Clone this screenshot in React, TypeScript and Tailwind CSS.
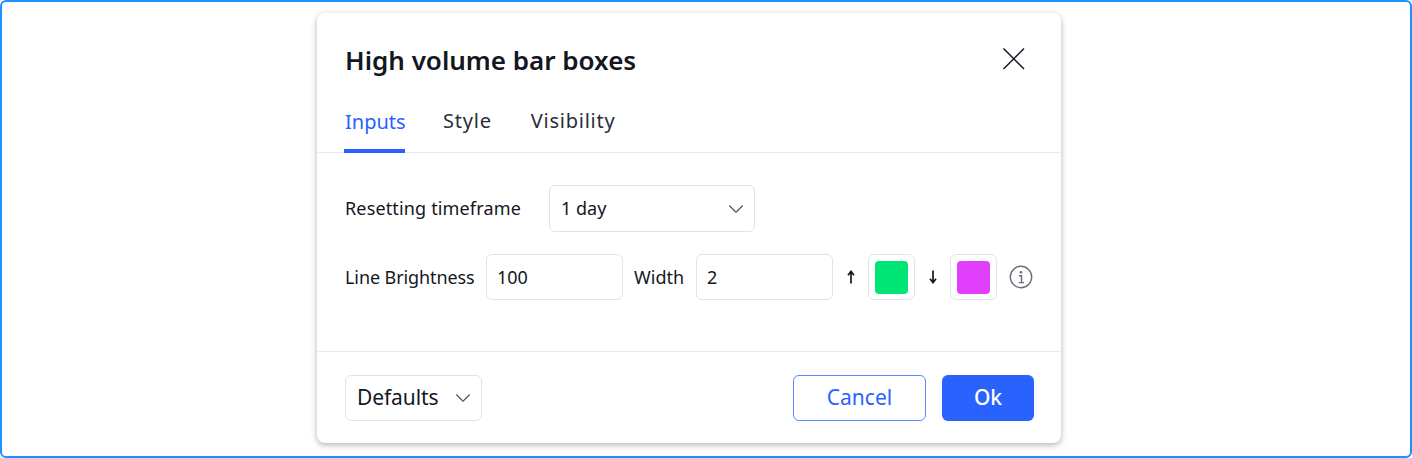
import { ChevronDown } from "lucide-react";

const font = { fontFamily: '"Noto Sans", sans-serif' };

function Arrow({ up }: { up?: boolean }) {
  return (
    <svg width="10" height="14" viewBox="0 0 10 14" className={up ? "" : "rotate-180"} fill="none">
      <path d="M5 13.5V2M2 5.2 5 1.4 8 5.2" stroke="#131722" strokeWidth="1.7" />
    </svg>
  );
}

function Swatch({ color }: { color: string }) {
  return (
    <div className="w-[47px] h-[46px] border border-[#e0e3eb] rounded-[6px] flex items-center justify-center shrink-0">
      <div className={`w-[33px] h-[33px] rounded-[4px] ${color}`} />
    </div>
  );
}

export default function App() {
  return (
    <div style={font} className="w-[1412px] h-[458px] bg-white border-2 border-[#1e90ff] rounded-[6px] flex text-[#131722] overflow-hidden">
      <div className="w-[744px] h-[430px] mt-[11px] ml-[315px] bg-white rounded-[8px] shadow-[0_2px_6px_rgba(0,0,0,0.3)] flex flex-col">
        {/* Header */}
        <div className="h-[69px] pl-[28px] pr-[32px] pt-[29px] flex items-start justify-between">
          <h1 className="text-[26px] leading-[36px] font-semibold text-[#131722]">High volume bar boxes</h1>
          <button className="mt-[2px]">
            <svg width="30" height="30" viewBox="0 0 30 30" fill="none">
              <path d="M4.5 4.5 25 25M25 4.5 4.5 25" stroke="#131722" strokeWidth="1.5" />
            </svg>
          </button>
        </div>

        {/* Tabs */}
        <div className="h-[71px] pl-[27px] flex items-end gap-[38px] border-b border-[#e8eaf0] text-[20px] leading-[28px]">
          <div className="text-[#2962ff] h-[45px] w-[61px] pl-[1px] border-b-[4px] border-[#2962ff] mb-[-1px] whitespace-nowrap">Inputs</div>
          <div className="h-[45px] text-[#2a2e39] tracking-[0.8px]">Style</div>
          <div className="h-[45px] ml-[1px] text-[#2a2e39] tracking-[0.75px]">Visibility</div>
        </div>

        {/* Inputs */}
        <div className="h-[199px] pl-[28px] pt-[32px] border-b border-[#e8eaf0] text-[18px]">
          <div className="flex items-center">
            <span className="w-[204px] tracking-[0.15px] whitespace-nowrap">Resetting timeframe</span>
            <div className="w-[206px] h-[47px] border border-[#e0e3eb] rounded-[6px] flex items-center justify-between pl-[11px] pr-[5px]">
              <span>1 day</span>
              <ChevronDown size={26} strokeWidth={1} className="text-[#50535e]" />
            </div>
          </div>
          <div className="flex items-center mt-[22px]">
            <span className="w-[141px] tracking-[-0.1px] whitespace-nowrap">Line Brightness</span>
            <div className="w-[137px] h-[46px] border border-[#e0e3eb] rounded-[6px] flex items-center px-[10px]">100</div>
            <span className="ml-[11px] w-[62px]">Width</span>
            <div className="w-[137px] h-[46px] border border-[#e0e3eb] rounded-[6px] flex items-center px-[10px]">2</div>
            <div className="w-[35px] flex justify-center"><Arrow up /></div>
            <Swatch color="bg-[#00e676]" />
            <div className="w-[35px] flex justify-center"><Arrow /></div>
            <Swatch color="bg-[#e040fb]" />
            <svg className="ml-[12px]" width="24" height="24" viewBox="0 0 24 24" fill="none">
              <circle cx="12" cy="12" r="10.7" stroke="#6a6d78" strokeWidth="1.4" />
              <circle cx="12" cy="7.3" r="1.3" fill="#6a6d78" />
              <path d="M10 10.8H12.5V17.6M9.8 17.6H15" stroke="#6a6d78" strokeWidth="1.4" />
            </svg>
          </div>
        </div>

        {/* Footer */}
        <div className="flex-1 pl-[28px] pr-[27px] pt-[23px] flex items-start justify-between text-[21px]">
          <div className="w-[137px] h-[46px] border border-[#e0e3eb] rounded-[6px] flex items-center justify-between pl-[11px] pr-[5px]">
            <span className="tracking-[-0.1px]">Defaults</span>
            <ChevronDown size={26} strokeWidth={1} className="text-[#50535e]" />
          </div>
          <div className="flex gap-[16px]">
            <button className="w-[133px] h-[46px] border border-[#5b87ff] rounded-[6px] text-[#2962ff]">Cancel</button>
            <button className="w-[92px] h-[46px] bg-[#2962ff] rounded-[6px] text-white font-medium">Ok</button>
          </div>
        </div>
      </div>
    </div>
  );
}
